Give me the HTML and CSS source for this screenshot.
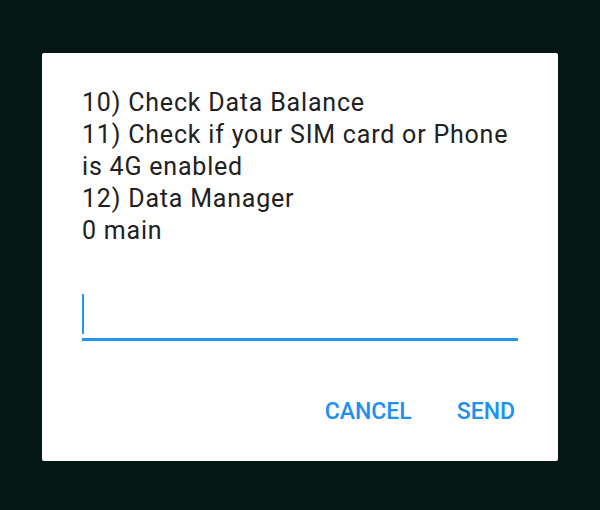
FILE: index.html
```html
<!DOCTYPE html>
<html>
<head>
<meta charset="utf-8">
<link rel="stylesheet" href="styles.css">
</head>
<body>
<div class="dialog">
  <div class="message">10) Check Data Balance<br>11) Check if your SIM card or Phone is 4G enabled<br>12) Data Manager<br>0 main</div>
  <div class="field"><span class="cursor"></span></div>
  <div class="actions">
    <span class="btn">CANCEL</span>
    <span class="btn">SEND</span>
  </div>
</div>
</body>
</html>
```
FILE: styles.css
```css
html, body {
  margin: 0;
  padding: 0;
  background: #041714;
  width: 600px;
  height: 510px;
  overflow: hidden;
}
body {
  padding-top: 53px;
  box-sizing: border-box;
  font-family: Roboto, "Noto Sans", sans-serif;
}
.dialog {
  margin: 0 auto;
  width: 516px;
  height: 408px;
  background: #fefefe;
  box-sizing: border-box;
  padding: 34px 40px 0 40px;
  display: flex;
  flex-direction: column;
  border-radius: 2px;
}
.message {
  font-size: 25px;
  letter-spacing: 0.8px;
  line-height: 32px;
  color: #212121;
}
.field {
  margin-top: 47px;
  height: 44px;
  border-bottom: 3px solid #2196f3;
  display: flex;
  align-items: flex-start;
}
.cursor {
  display: block;
  width: 2px;
  height: 40px;
  background: #2196f3;
}
.actions {
  display: flex;
  justify-content: flex-end;
  gap: 45px;
  margin-top: 56px;
  padding-right: 3px;
}
.btn {
  font-size: 23px;
  font-weight: 500;
  color: #1e90f0;
  line-height: 30px;
}
```
